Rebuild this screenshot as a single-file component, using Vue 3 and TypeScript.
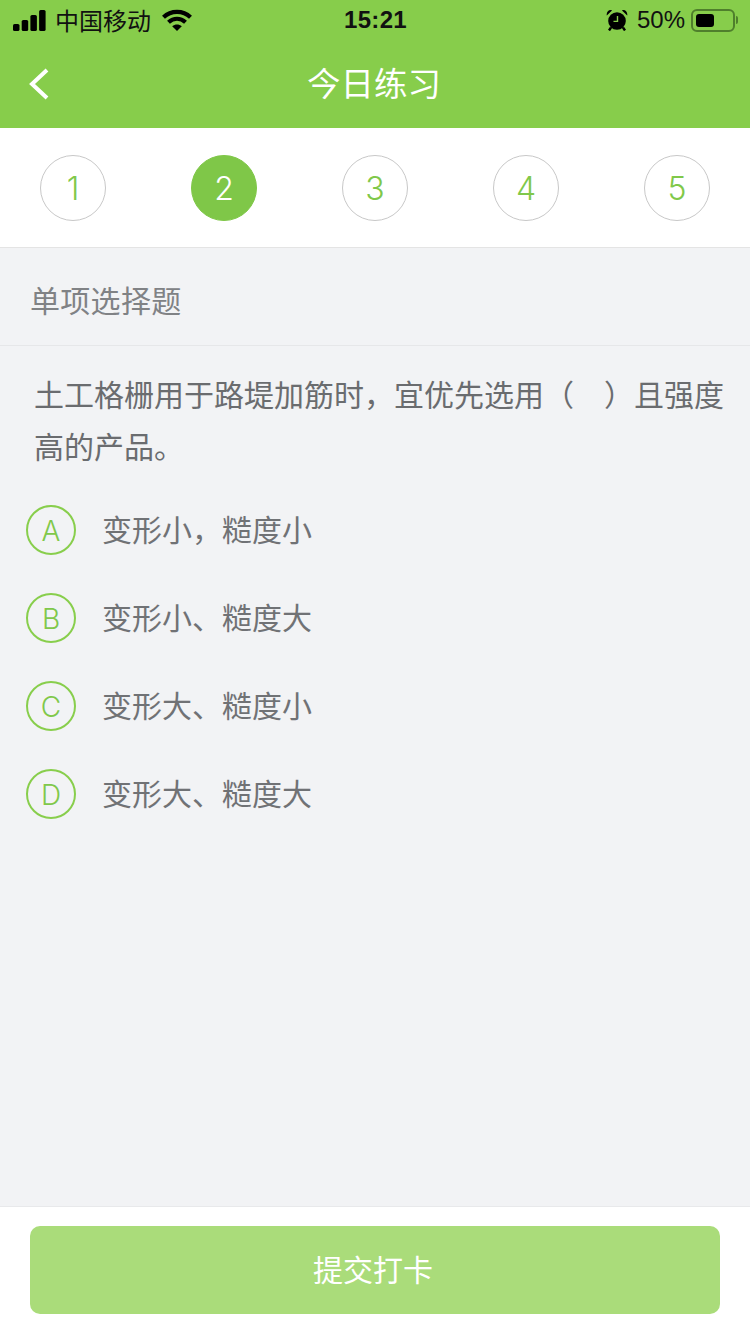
<script setup lang="ts">
// 今日练习页
const steps = [1, 2, 3, 4, 5]
const current = 2

const question = '土工格栅用于路堤加筋时，宜优先选用（　）且强度高的产品。'

const options = [
  { key: 'A', text: '变形小，糙度小' },
  { key: 'B', text: '变形小、糙度大' },
  { key: 'C', text: '变形大、糙度小' },
  { key: 'D', text: '变形大、糙度大' },
]
</script>

<template>
  <div class="page">
    <header class="header">
      <div class="status">
        <div class="status-left">
          <svg class="signal" width="33" height="21" viewBox="0 0 33 21" aria-hidden="true">
            <rect x="0" y="14" width="6.5" height="7" rx="1.6" />
            <rect x="8.7" y="10" width="6.5" height="11" rx="1.6" />
            <rect x="17.4" y="5" width="6.5" height="16" rx="1.6" />
            <rect x="26.1" y="0" width="6.5" height="21" rx="1.6" />
          </svg>
          <span class="carrier">中国移动</span>
          <svg class="wifi" width="30" height="22" viewBox="0 0 30 22" aria-hidden="true">
            <path d="M1.5 8.2C9 1 21 1 28.5 8.2" />
            <path d="M6.5 13.2C11.5 8.6 18.5 8.6 23.5 13.2" />
            <path class="wifi-dot" d="M15 22L10.2 17.2C13 15 17 15 19.8 17.2Z" />
          </svg>
        </div>
        <span class="time">15:21</span>
        <div class="status-right">
          <svg class="alarm" width="22" height="22" viewBox="0 0 22 22" aria-hidden="true">
            <circle cx="11" cy="12" r="8.8" fill="#000" />
            <path d="M0.8 6.5L6 1.4C3.6 -0.2 0 2.6 0.8 6.5ZM21.2 6.5L16 1.4C18.4 -0.2 22 2.6 21.2 6.5Z" fill="#000" />
            <path d="M5 18.5L3 21.5M17 18.5L19 21.5" stroke="#000" stroke-width="2.4" />
            <path d="M11.5 7V12.4H7.5" fill="none" stroke="#88ce4c" stroke-width="1.4" />
          </svg>
          <span class="percent">50%</span>
          <div class="battery"><i class="battery-level"></i></div>
          <i class="battery-cap"></i>
        </div>
      </div>
      <div class="navbar">
        <svg class="back" width="20" height="32" viewBox="0 0 20 32" aria-hidden="true">
          <path d="M18 2L3 16L18 30" />
        </svg>
        <h1 class="title">今日练习</h1>
      </div>
    </header>

    <nav class="steps">
      <span
        v-for="n in steps"
        :key="n"
        class="step"
        :class="{ 'step--active': n === current }"
      >{{ n }}</span>
    </nav>

    <main class="body">
      <div class="kind">单项选择题</div>
      <p class="question">{{ question }}</p>
      <ul class="options">
        <li v-for="opt in options" :key="opt.key" class="option">
          <span class="option-key">{{ opt.key }}</span>
          <span class="option-text">{{ opt.text }}</span>
        </li>
      </ul>
    </main>

    <footer class="footer">
      <button type="button" class="submit">提交打卡</button>
    </footer>
  </div>
</template>

<style scoped>
.page {
  width: 750px;
  height: 1334px;
  display: flex;
  flex-direction: column;
  background: #f2f3f5;
  font-family: "Liberation Sans", "Noto Sans CJK SC", sans-serif;
  overflow: hidden;
}

/* 顶部 */
.header {
  height: 128px;
  flex: none;
  background: #87cd4b;
}

.status {
  height: 40px;
  display: grid;
  grid-template-columns: 1fr auto 1fr;
  align-items: center;
  padding: 0 12px 0 13px;
  color: #000;
  font-size: 24px;
}

.status-left {
  display: flex;
  align-items: center;
}

.signal {
  fill: #000;
}

.carrier {
  margin-left: 9px;
  padding-bottom: 2px;
  color: #111;
}

.wifi {
  margin-left: 11px;
}

.wifi path {
  fill: none;
  stroke: #000;
  stroke-width: 4.2;
}

.wifi .wifi-dot {
  fill: #000;
  stroke: none;
}

.time {
  font-size: 24px;
  font-weight: 700;
  letter-spacing: 0.3px;
  color: #111;
}

.status-right {
  display: flex;
  align-items: center;
  justify-content: flex-end;
}

.percent {
  margin-left: 9px;
  color: #111;
}

.battery {
  width: 44px;
  height: 23px;
  margin-left: 6px;
  padding: 3px;
  box-sizing: border-box;
  border: 2px solid #4f7f2c;
  border-radius: 6px;
}

.battery-level {
  display: block;
  width: 18px;
  height: 100%;
  background: #000;
  border-radius: 3px;
}

.battery-cap {
  width: 2px;
  height: 8px;
  background: #4f7f2c;
  border-radius: 0 2px 2px 0;
  margin-left: 1px;
}

.navbar {
  height: 88px;
  display: flex;
  align-items: center;
  justify-content: center;
  position: relative;
}

.back {
  position: absolute;
  left: 29px;
  top: 28px;
  fill: none;
  stroke: #fff;
  stroke-width: 4;
}

.title {
  margin: 0 2px 5px 0;
  font-size: 33.5px;
  font-weight: 400;
  color: #fff;
}

/* 步骤 */
.steps {
  height: 120px;
  flex: none;
  box-sizing: border-box;
  padding: 27px 40px 0;
  display: flex;
  justify-content: space-between;
  align-items: flex-start;
  background: #fff;
  border-bottom: 1px solid #e4e4e4;
}

.step {
  width: 66px;
  height: 66px;
  box-sizing: border-box;
  border: 1px solid #c8c8c8;
  border-radius: 50%;
  display: flex;
  align-items: center;
  justify-content: center;
  font-family: Inter, "Liberation Sans", sans-serif;
  font-size: 32px;
  font-weight: 300;
  color: #80c84a;
}

.step--active {
  background: #7fc748;
  border-color: #7fc748;
  color: #fff;
}

/* 题目 */
.body {
  flex: 1;
  min-height: 0;
}

.kind {
  height: 98px;
  box-sizing: border-box;
  padding: 4px 0 0 30px;
  display: flex;
  align-items: center;
  border-bottom: 1px solid #e6e7e9;
  font-size: 30px;
  letter-spacing: 0.3px;
  color: #808285;
}

.question {
  margin: 0;
  padding: 24px 20px 0 34px;
  font-size: 30px;
  line-height: 52px;
  color: #6a6c6f;
}

.options {
  list-style: none;
  margin: 0;
  padding: 12px 0 0 26px;
}

.option {
  height: 88px;
  display: flex;
  align-items: center;
}

.option-key {
  width: 50px;
  height: 50px;
  box-sizing: border-box;
  padding-top: 2px;
  border: 2px solid #88ce4c;
  border-radius: 50%;
  display: flex;
  align-items: center;
  justify-content: center;
  font-family: Inter, "Liberation Sans", sans-serif;
  font-size: 28px;
  font-weight: 300;
  color: #80c84a;
}

.option-text {
  margin-left: 26px;
  padding-bottom: 4px;
  font-size: 30px;
  color: #707275;
}

/* 底部 */
.footer {
  height: 128px;
  flex: none;
  box-sizing: border-box;
  padding: 19px 30px 0;
  background: #fff;
  border-top: 1px solid #e8e9eb;
}

.submit {
  width: 690px;
  height: 88px;
  display: block;
  border: 0;
  border-radius: 10px;
  padding: 0 4px 5px 0;
  background: #aadc7a;
  color: #fff;
  font-family: inherit;
  font-size: 30px;
}
</style>
